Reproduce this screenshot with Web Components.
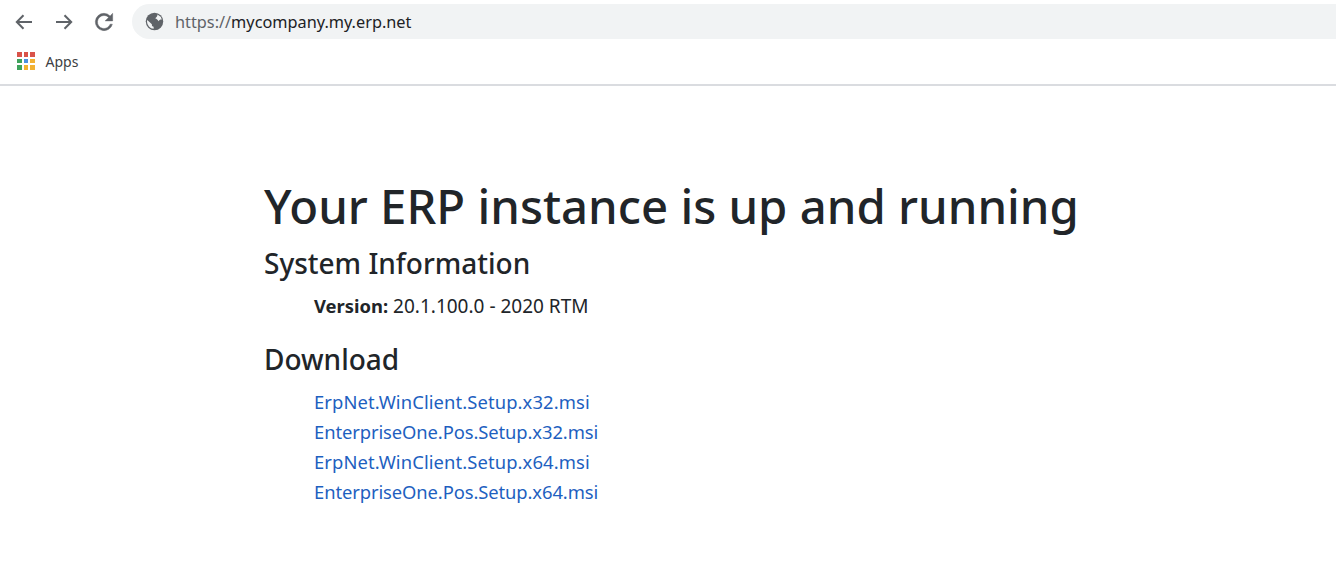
<!DOCTYPE html>
<html>
<head>
<meta charset="utf-8">
<title>ERP</title>
<style>
html, body { margin: 0; background: #fff; }
body { font-family: "Noto Sans", "Open Sans", sans-serif; color: #212529; }
</style>
</head>
<body>
<browser-toolbar url="mycompany.my.erp.net"></browser-toolbar>
<bookmark-bar></bookmark-bar>
<main-page>
  <h-title slot="title">Your ERP instance is up and running</h-title>
  <info-section heading="System Information">
    <version-line label="Version:">20.1.100.0 - 2020 RTM</version-line>
  </info-section>
  <info-section heading="Download">
    <file-link style="letter-spacing:.1px">ErpNet.WinClient.Setup.x32.msi</file-link>
    <file-link style="letter-spacing:-.1px">EnterpriseOne.Pos.Setup.x32.msi</file-link>
    <file-link style="letter-spacing:.1px">ErpNet.WinClient.Setup.x64.msi</file-link>
    <file-link style="letter-spacing:-.1px">EnterpriseOne.Pos.Setup.x64.msi</file-link>
  </info-section>
</main-page>

<script>
class BrowserToolbar extends HTMLElement {
  constructor() {
    super();
    this.attachShadow({ mode: "open" });
    this.shadowRoot.innerHTML = `
<style>
:host { display: flex; align-items: center; height: 44px; box-sizing: border-box; padding: 4px 0 5px 14px; overflow: hidden; }
svg { display: block; flex: none; }
.nav { fill: none; stroke: #5f6368; stroke-width: 2; }
.back { margin-right: 20px; }
.fwd { margin-right: 17px; }
.reload { margin-right: 15px; }
.omni { flex: 1; height: 35px; margin-right: -40px; display: flex; align-items: center; background: #f1f3f4; border-radius: 18px 0 0 18px; padding-left: 12px; }
.globe { margin-right: 10px; }
.url { font-size: 16.3px; color: #202124; white-space: nowrap; }
.url span { color: #5f6368; }
</style>
<svg class="nav back" width="20" height="20" viewBox="0 0 20 20"><path d="M18 10H3M9.5 3.2 2.8 10l6.7 6.8"/></svg>
<svg class="nav fwd" width="20" height="20" viewBox="0 0 20 20"><path d="M2 10h15M10.5 3.2 17.2 10l-6.7 6.8"/></svg>
<svg width="26" height="26" class="reload" viewBox="0 0 24 24"><path fill="#5f6368" stroke="#5f6368" stroke-width=".4" d="M17.65 6.35A7.96 7.96 0 0 0 12 4a8 8 0 1 0 7.73 10h-2.08A6 6 0 1 1 12 6c1.66 0 3.14.69 4.22 1.78L13 11h7V4l-2.35 2.35z"/></svg>
<div class="omni">
  <svg class="globe" width="21" height="21" viewBox="0 0 24 24">
    <circle cx="12" cy="12" r="10" fill="#5f6368"/>
    <path fill="#f1f3f4" d="M3.7 10.2 9 15v1c0 1.1.9 2 2 2v2.400A8.600 8.600 0 0 1 3.400 12c0-.6.1-1.200.3-1.800zM15.400 3.900a8.700 8.700 0 0 1 5 6c-1.600-.3-3 .4-3.700 1.800-.9-1.600-2.300-3-3.900-3.500 1.500-.8 2.500-2.400 2.600-4.300z"/>
  </svg>
  <div class="url"><span>https://</span>${this.getAttribute("url")}</div>
</div>`;
  }
}
customElements.define("browser-toolbar", BrowserToolbar);

class BookmarkBar extends HTMLElement {
  constructor() {
    super();
    this.attachShadow({ mode: "open" });
    const colors = ["#d9534a","#d9534a","#d9534a","#3fa35c","#4a90e2","#f2b233","#3fa35c","#f2b233","#f2b233"];
    const dots = colors.map(c => `<i style="background:${c}"></i>`).join("");
    this.shadowRoot.innerHTML = `
<style>
:host { display: flex; align-items: center; height: 42px; box-sizing: border-box; padding: 0 0 6px 17px; border-bottom: 2px solid #dadce0; font-size: 14px; color: #3c4043; }
.grid { display: grid; grid-template-columns: repeat(3, 4.500px); grid-auto-rows: 4.500px; gap: 2px; margin-right: 11px; }
.grid i { display: block; }
</style>
<div class="grid">${dots}</div>
<span>Apps</span>`;
  }
}
customElements.define("bookmark-bar", BookmarkBar);

class MainPage extends HTMLElement {
  constructor() {
    super();
    this.attachShadow({ mode: "open" });
    this.shadowRoot.innerHTML = `
<style>
:host { display: block; padding: 91px 0 0 264px; }
</style>
<slot name="title"></slot>
<slot></slot>`;
  }
}
customElements.define("main-page", MainPage);

class HTitle extends HTMLElement {
  constructor() {
    super();
    this.attachShadow({ mode: "open" });
    this.shadowRoot.innerHTML = `
<style>
:host { display: block; font-size: 47.3px; font-weight: 500; line-height: 58px; white-space: nowrap; color: #212529; }
</style>
<slot></slot>`;
  }
}
customElements.define("h-title", HTitle);

class InfoSection extends HTMLElement {
  constructor() {
    super();
    this.attachShadow({ mode: "open" });
    this.shadowRoot.innerHTML = `
<style>
:host { display: block; margin-top: 11px; }
h2 { margin: 0 0 11px; font-size: 28px; font-weight: 500; line-height: 34px; color: #212529; }
.body { padding-left: 50px; display: flex; flex-direction: column; margin-bottom: 21px; }
</style>
<h2>${this.getAttribute("heading")}</h2>
<div class="body"><slot></slot></div>`;
  }
}
customElements.define("info-section", InfoSection);

class VersionLine extends HTMLElement {
  constructor() {
    super();
    this.attachShadow({ mode: "open" });
    this.shadowRoot.innerHTML = `
<style>
:host { display: block; font-size: 19px; line-height: 30px; color: #212529; white-space: nowrap; }
b { font-weight: 700; font-size: 18.4px; }
</style>
<b>${this.getAttribute("label")}</b> <slot></slot>`;
  }
}
customElements.define("version-line", VersionLine);

class FileLink extends HTMLElement {
  constructor() {
    super();
    this.attachShadow({ mode: "open" });
    this.shadowRoot.innerHTML = `
<style>
:host { display: block; font-size: 18.4px; line-height: 30px; white-space: nowrap; }
a { color: #1e5fbf; text-decoration: none; }
</style>
<a href="#"><slot></slot></a>`;
  }
}
customElements.define("file-link", FileLink);
</script>
</body>
</html>
